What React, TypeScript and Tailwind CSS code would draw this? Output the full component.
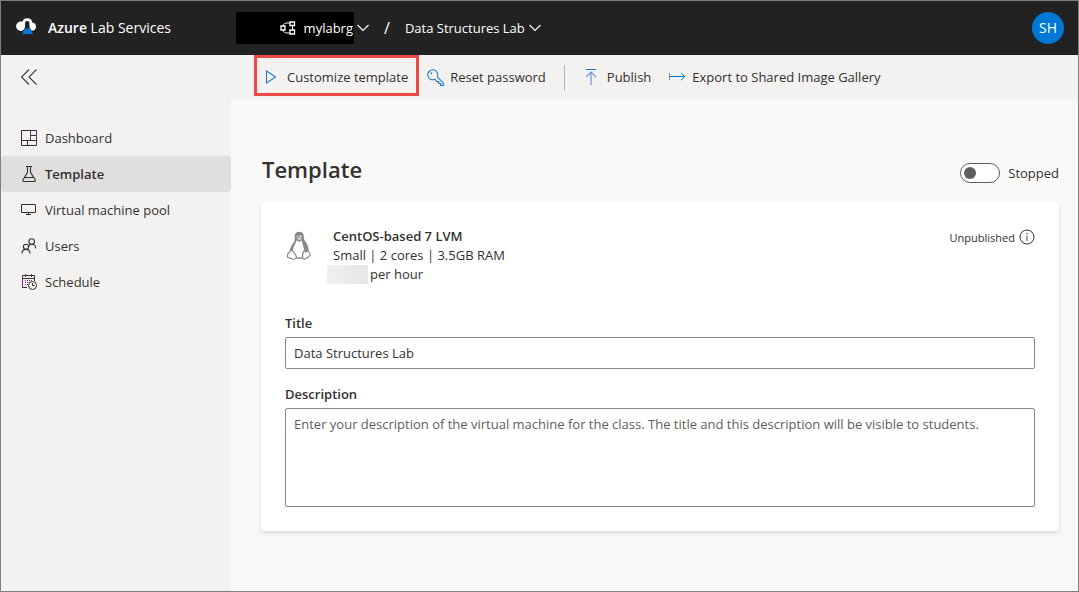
import { useState, type ReactNode } from "react";

function Logo() {
  return (
    <svg width="20" height="20" viewBox="0 0 20 20" aria-hidden="true">
      <circle cx="4.8" cy="8.2" r="4.7" fill="#fff" />
      <circle cx="15.8" cy="8.7" r="4.1" fill="#fff" />
      <path d="M9 9.500V5h4.600v4.500l2.900 5H6z" fill="#222" />
      <path d="M7.700 7V5c0-2.300 1.300-3.400 3.600-3.400s3.600 1.200 3.600 3.400v2" fill="none" stroke="#fff" strokeWidth="2.700" />
      <path d="M9 10.500h4.800l3.200 5.500H6z" fill="#0078d4" />
    </svg>
  );
}

function ChevronDown() {
  return (
    <svg width="12" height="8" viewBox="0 0 12 8" fill="none" stroke="#fff" strokeWidth="1.1" aria-hidden="true">
      <path d="M.5 1 6 6.5 11.5 1" />
    </svg>
  );
}

function GroupIcon() {
  return (
    <svg width="16" height="14" viewBox="0 0 16 14" fill="none" stroke="#fff" aria-hidden="true">
      <path d="M1 5h4v4H1z" strokeWidth="1.300" />
      <path d="M10 1h4.500v3.500H10zM10 9h4.500v4H10z" strokeWidth="1.300" />
      <path d="M3 5c.4-2.200 2-3 4-3h3M3 9c.4 2.200 2 3 4 3h3M12.500 4.500V9" />
    </svg>
  );
}

function DoubleChevronLeft() {
  return (
    <svg width="16" height="16" viewBox="0 0 16 16" fill="none" stroke="#3b3550" strokeWidth="1.1" aria-hidden="true">
      <path d="M8 .5.5 8 8 15.500M15.500.5 8 8l7.500 7.500" />
    </svg>
  );
}

function PlayIcon() {
  return (
    <svg width="12" height="14" viewBox="0 0 12 14" fill="none" stroke="#2b79c7" strokeWidth="1.1" aria-hidden="true">
      <path d="M1.500 1v12L10.500 7z" />
    </svg>
  );
}

function KeyIcon() {
  return (
    <svg width="17" height="17" viewBox="0 0 17 17" fill="none" stroke="#2b79c7" strokeWidth="1.1" aria-hidden="true">
      <path d="M10.300 7.900 16.400 14v2.400h-2.800v-1.900h-1.900v-1.900H9.900L7.900 10.300A5 5 0 1 1 10.300 7.900z" />
      <circle cx="4.400" cy="4.200" r=".9" fill="#2b79c7" stroke="none" />
    </svg>
  );
}

function PublishIcon() {
  return (
    <svg width="12" height="16" viewBox="0 0 12 16" fill="none" aria-hidden="true">
      <path d="M1 .5h10" stroke="#0078d4" />
      <path d="M6 16V3.500M1 8.200l5-5 5 5" stroke="#6f8fd8" strokeWidth="1.200" />
    </svg>
  );
}

function ExportIcon() {
  return (
    <svg width="17" height="10" viewBox="0 0 17 10" fill="none" stroke="#0078d4" aria-hidden="true">
      <path d="M.5 1v7" stroke="#6f8fd8" />
      <path d="M1 4.500h15" />
      <path d="m12 .800 3.800 3.700L12 8.200" />
    </svg>
  );
}

function DashboardIcon() {
  return (
    <svg width="16" height="16" viewBox="0 0 16 16" fill="none" stroke="#323130" aria-hidden="true">
      <path d="M.5.5h15v15H.5zM.5 10.500h15M9.500.5v10M9.500 5.500h6M6.500 10.500v5" />
      <path d="M9.500 1v9M15.500 1v14" stroke="#66306a" />
    </svg>
  );
}

function FlaskIcon() {
  return (
    <svg width="16" height="16" viewBox="0 0 16 16" fill="none" stroke="#323130" strokeWidth="1.1" aria-hidden="true">
      <path d="M5 .5h6M6.500.5v5.800L2.200 13.500q-.9 2 .9 2h10q1.800 0 .9-2L9.500 6.300V.5M3.700 11.500h8.900" />
    </svg>
  );
}

function MonitorIcon() {
  return (
    <svg width="16" height="16" viewBox="0 0 16 16" fill="none" stroke="#323130" aria-hidden="true">
      <path d="M.5 2.500h14v8H.5zM7.500 10.500v2M5 12.500h5" />
    </svg>
  );
}

function UsersIcon() {
  return (
    <svg width="16" height="16" viewBox="0 0 16 16" fill="none" stroke="#323130" strokeWidth="1.1" aria-hidden="true">
      <circle cx="10.700" cy="3.500" r="2.800" />
      <circle cx="5" cy="8.800" r="2.600" />
      <path d="M1 15.500c0-2.500 1.700-4.100 4-4.100s4 1.600 4 4.100M7.500 8.300c.7-1.300 1.800-2 3.200-2 2.300 0 4 1.600 4 4.200" />
    </svg>
  );
}

function ScheduleIcon() {
  return (
    <svg width="16" height="16" viewBox="0 0 16 16" fill="none" stroke="#323130" aria-hidden="true">
      <path d="M6 13.500H1.500v-12h12V7M1.500 4.500h12" />
      <path d="M1.500 2v11M4.500 0v3M10.500 0v3" stroke="#6b2a6b" />
      <path d="M4 6.500h1M6 6.500h1M8 6.500h1M10 6.500h1M4 8.500h1M6 8.500h1M4 10.500h1M6 10.500h1" stroke="#8a2a8a" />
      <circle cx="11.500" cy="11.500" r="4" />
      <path d="M11.500 9v2.500h2" />
    </svg>
  );
}

function PenguinIcon() {
  return (
    <svg width="24" height="30" viewBox="0 0 24 30" aria-hidden="true">
      <path
        d="M12.200.8C9.300.8 7.700 2.500 7.700 5.200c0 2.800.4 4.300-1.200 6.500-2.200 2.900-3.900 5.700-4 9.300l3.800 6.500h10.800l4.400-6c.5-3.900-.6-7.600-2.700-10.400-1.500-2.100-2-3.200-2-5.700C16.800 2.400 15 .8 12.200.8z"
        fill="#8a8886"
      />
      <path
        d="M9.300 9.200c-.3 2.700-1.700 4.500-2.800 7.200-.5 1.200-.9 2.500-.7 3.800l3 3.800c.7 1.400.6 2.500.4 3.200h5.800c-.2-2.500.2-5.100 1.400-6.400.8-.5.900-1.600.6-2.700-.6-3.200-1.800-5.200-2.500-8.600L12.300 11z"
        fill="#fff"
      />
      <path d="M9.300 7.500 12 6.100l3.300 1.200-2.900 2.300z" fill="#d2d0ce" />
      <circle cx="10.300" cy="5.200" r=".8" fill="#e1dfdd" />
      <circle cx="13.600" cy="5.200" r=".9" fill="#fff" />
      <path
        d="M3.900 19.800c.9-.5 2 .1 2.800 1.300l2.300 3.500c1 1.700-.2 3.700-2 3.600-1.900-.1-3.400-1.200-5.600-1.600-1.300-.3-1-1.500-.8-2.500.1-1-.3-1.700.9-2 1.400-.3 1.300-1.700 2.400-2.300zM16.500 20.300c.4-1.200 1.300.9 2.700.5 1.300-.3 1.500-1.600 2.100-1.200.7.5.2 1.800 1.200 2.900.8.900 1.300 1.500.2 2.300-1.700 1-2.700 2.700-4.500 3.200-1.500.4-2.600-.5-2.500-2 .1-2.200.2-4 .8-5.700z"
        fill="#fff"
        stroke="#8a8886"
        strokeWidth="1.100"
      />
      <path d="M8.700 27h7" stroke="#8a8886" strokeWidth="1.200" />
    </svg>
  );
}

function InfoIcon() {
  return (
    <svg width="16" height="16" viewBox="0 0 16 16" fill="none" stroke="#323130" aria-hidden="true">
      <circle cx="8" cy="8" r="7" />
      <path d="M8 6.500V12" stroke="#6b2a6b" />
      <path d="M8 4v1.200" stroke="#6b2a6b" strokeWidth="1.200" />
    </svg>
  );
}

const navItems = [
  { label: "Dashboard", icon: <DashboardIcon /> },
  { label: "Template", icon: <FlaskIcon /> },
  { label: "Virtual machine pool", icon: <MonitorIcon /> },
  { label: "Users", icon: <UsersIcon /> },
  { label: "Schedule", icon: <ScheduleIcon /> },
];

function Command({ icon, wide, children }: { icon: ReactNode; wide?: boolean; children: ReactNode }) {
  return (
    <button
      type="button"
      className={wide ? "flex items-center gap-2.5 whitespace-nowrap" : "flex items-center gap-1.5 whitespace-nowrap"}
    >
      {icon}
      {children}
    </button>
  );
}

export default function App() {
  const [title, setTitle] = useState("Data Structures Lab");
  const [running, setRunning] = useState(false);

  return (
    <div className="flex min-h-screen flex-col border border-[#7f7f7f] bg-[#faf9f8] font-['Open_Sans','Noto_Sans',sans-serif] text-[13px] leading-5 text-[#323130]">
      <header className="flex h-[54px] items-center bg-[#222] text-white">
        <div className="flex w-[235px] shrink-0 items-center gap-3 pl-[15px] text-sm">
          <Logo />
          <span>
            <b className="font-semibold">Azure</b> Lab Services
          </span>
        </div>
        <nav aria-label="Breadcrumb" className="flex items-center">
          <button type="button" className="flex items-center gap-[3px]">
            <span className="flex h-8 w-[118px] items-center justify-end gap-2 bg-black pr-px">
              <GroupIcon />
              mylabrg
            </span>
            <ChevronDown />
          </button>
          <span className="px-[15px] text-base">/</span>
          <button type="button" className="flex items-center gap-1">
            Data Structures Lab
            <ChevronDown />
          </button>
        </nav>
        <button type="button" className="mr-3.5 ml-auto size-8 rounded-full bg-[#0078d4] text-sm">
          SH
        </button>
      </header>

      <div className="flex grow">
        <aside className="w-[230px] shrink-0 bg-[#f3f2f1]">
          <div className="flex h-[45px] items-center border-b border-[#edebe9] pl-5">
            <button type="button" aria-label="Collapse menu">
              <DoubleChevronLeft />
            </button>
          </div>
          <nav aria-label="Lab" className="pt-5">
            {navItems.map((item) => (
              <a
                key={item.label}
                href="#"
                className={
                  item.label === "Template"
                    ? "flex h-9 items-center gap-2 rounded-sm bg-[#e1dfdd] pl-5 font-semibold"
                    : "flex h-9 items-center gap-2 pl-5"
                }
              >
                {item.icon}
                {item.label}
              </a>
            ))}
          </nav>
        </aside>

        <div className="flex grow flex-col">
          <div className="flex h-[45px] items-start bg-[#f3f2f1] pl-[23px]">
            <div className="flex h-[41px] items-center border-3 border-[#ec4b45] px-2 pt-0.5">
              <Command wide icon={<PlayIcon />}>
                Customize template
              </Command>
            </div>
            <div className="flex h-11 items-center gap-[18px] pl-2">
              <Command icon={<KeyIcon />}>Reset password</Command>
              <div className="mr-0.5 h-[25px] w-px bg-[#b3b0ad]" />
              <Command wide icon={<PublishIcon />}>
                Publish
              </Command>
              <Command icon={<ExportIcon />}>Export to Shared Image Gallery</Command>
            </div>
          </div>

          <main className="pt-[53px] pr-[19px] pl-[30px]">
            <div className="flex h-[49px] items-start justify-between">
              <h1 className="pl-px text-[22px] leading-8 font-semibold">Template</h1>
              <label className="flex items-center gap-2 pt-2.5">
                <input
                  type="checkbox"
                  role="switch"
                  checked={running}
                  onChange={(e) => setRunning(e.target.checked)}
                  className="flex h-5 w-10 appearance-none items-center rounded-full border border-[#605e5c] bg-white px-[3px] before:size-3 before:rounded-full before:bg-[#605e5c] checked:justify-end"
                />
                Stopped
              </label>
            </div>

            <section className="rounded-sm bg-white p-6 shadow-[0_2px_4px_rgba(0,0,0,0.14)]">
              <div className="mb-[29px] flex items-start pt-px leading-[19px]">
                <div className="w-12 shrink-0 pt-1 pl-0.5">
                  <PenguinIcon />
                </div>
                <div>
                  <h2 className="font-semibold">CentOS-based 7 LVM</h2>
                  <p>Small | 2 cores | 3.5GB RAM</p>
                  <p className="-ml-1.5 flex items-center gap-0.5">
                    <span className="h-[19px] w-[41px] bg-linear-to-r from-[#f0f0f0] to-[#e6e6e6]" />
                    per hour
                  </p>
                </div>
                <div className="ml-auto flex h-5 items-center gap-1 text-[11px]">
                  Unpublished
                  <InfoIcon />
                </div>
              </div>

              <div className="mb-[15px] flex flex-col gap-1">
                <label htmlFor="title" className="font-semibold">
                  Title
                </label>
                <input
                  id="title"
                  type="text"
                  value={title}
                  onChange={(e) => setTitle(e.target.value)}
                  className="h-8 w-full rounded-xs border border-[#8a8886] px-2"
                />
              </div>
              <div className="flex flex-col gap-1">
                <label htmlFor="description" className="font-semibold">
                  Description
                </label>
                <textarea
                  id="description"
                  placeholder="Enter your description of the virtual machine for the class. The title and this description will be visible to students."
                  className="block h-[99px] w-full resize-none rounded-xs border border-[#8a8886] px-2 py-[5px] placeholder:text-[#605e5c]"
                />
              </div>
            </section>
          </main>
        </div>
      </div>
    </div>
  );
}
